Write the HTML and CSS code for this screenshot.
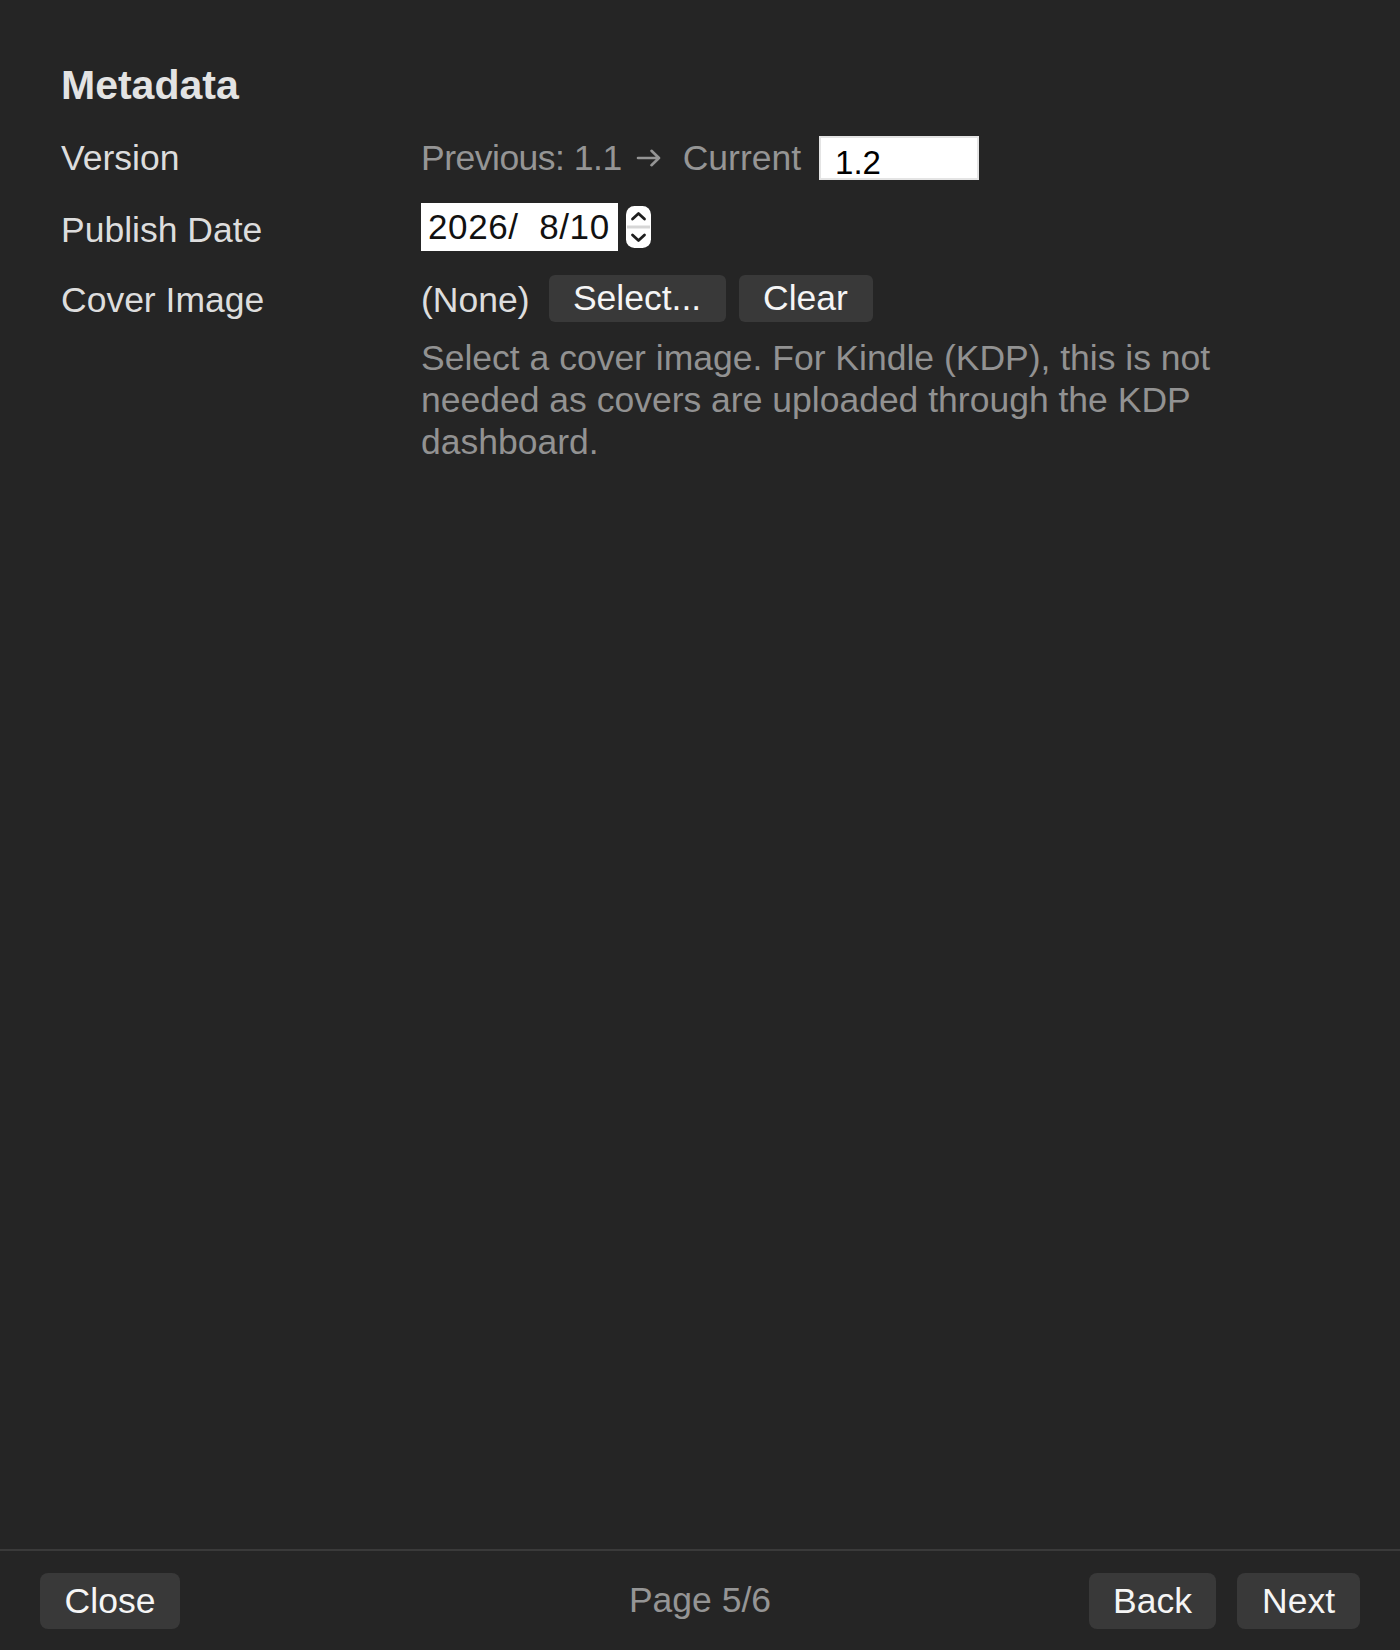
FILE: index.html
```html
<!DOCTYPE html>
<html>
<head>
<meta charset="utf-8">
<link rel="stylesheet" href="styles.css">
</head>
<body>
<div class="page">
  <main class="content">
    <h2 class="title">Metadata</h2>
    <div class="row row-version">
      <div class="label">Version</div>
      <div class="value">
        <span class="muted prev">Previous: 1.1</span>
        <svg class="arrow" width="26" height="18" viewBox="0 0 26 18">
          <path d="M2 9 H23 M15.5 1.8 L23 9 L15.5 16.2" fill="none" stroke="#959595" stroke-width="2.6" stroke-linecap="round" stroke-linejoin="round"/>
        </svg>
        <span class="muted">Current</span>
        <span class="text-input">1.2</span>
      </div>
    </div>
    <div class="row row-date">
      <div class="label">Publish Date</div>
      <div class="value">
        <span class="date-input">2026/  8/10</span>
        <svg class="stepper" width="25" height="42" viewBox="0 0 25 42">
          <rect x="0" y="0" width="25" height="42" rx="8.5" fill="#fff"/>
          <line x1="1" y1="21" x2="24" y2="21" stroke="#d6d6d6" stroke-width="3"/>
          <path d="M6.5 13 L12.5 7.5 L18.5 13" fill="none" stroke="#1e1e1e" stroke-width="2.8" stroke-linecap="round" stroke-linejoin="round"/>
          <path d="M6.5 29 L12.5 34.5 L18.5 29" fill="none" stroke="#1e1e1e" stroke-width="2.8" stroke-linecap="round" stroke-linejoin="round"/>
        </svg>
      </div>
    </div>
    <div class="row row-cover">
      <div class="label">Cover Image</div>
      <div class="value">
        <span class="none">(None)</span>
        <button class="btn btn-select">Select...</button>
        <button class="btn btn-clear">Clear</button>
      </div>
    </div>
    <p class="help">Select a cover image. For Kindle (KDP), this is not needed as covers are uploaded through the KDP dashboard.</p>
  </main>
  <footer class="footer">
    <div class="footer-left">
      <button class="btn fbtn btn-close">Close</button>
    </div>
    <span class="pager">Page 5/6</span>
    <div class="nav">
      <button class="btn fbtn btn-back">Back</button>
      <button class="btn fbtn btn-next">Next</button>
    </div>
  </footer>
</div>
</body>
</html>
```

FILE: styles.css
```css
* { box-sizing: border-box; }
html, body {
  margin: 0;
  padding: 0;
  background: #252525;
}
body {
  font-family: "Liberation Sans", Arial, sans-serif;
  color: #dddddd;
  font-size: 35.5px;
}
.page {
  width: 1400px;
  height: 1650px;
  display: flex;
  flex-direction: column;
}
.content {
  flex: 1;
  padding: 62px 0 0 61px;
}
.title {
  margin: 0 0 15px 0;
  font-size: 41px;
  font-weight: bold;
  line-height: 46px;
  color: #e3e3e3;
}
.row {
  display: flex;
  align-items: center;
  height: 70px;
}
.label {
  width: 360px;
  line-height: 40px;
  color: #dddddd;
}
.row-date .label,
.row-cover .label {
  padding-top: 4px;
}
.value {
  display: flex;
  align-items: center;
}
.muted {
  color: #959595;
  line-height: 40px;
}
.prev {
  letter-spacing: -0.5px;
}
.arrow {
  margin: 0 21px 0 14px;
  flex: none;
}
.text-input {
  margin-left: 18px;
  width: 160px;
  height: 44px;
  background: #fff;
  border: 2px solid #e4e4e4;
  color: #000;
  font-size: 33px;
  line-height: 26px;
  padding: 12px 0 0 14px;
}
.date-input {
  width: 197px;
  height: 48px;
  margin-top: -3px;
  background: #fff;
  color: #111;
  font-size: 35px;
  letter-spacing: 0.6px;
  line-height: 48px;
  padding-left: 7px;
  white-space: pre;
}
.stepper {
  margin-left: 8px;
  margin-top: -2px;
  flex: none;
}
.none {
  color: #dddddd;
  line-height: 40px;
  padding-top: 4px;
  margin-right: 19px;
}
.btn {
  font-family: "Liberation Sans", Arial, sans-serif;
  font-size: 35.5px;
  color: #f5f5f5;
  background: #393939;
  border: none;
  border-radius: 6px;
  height: 47px;
  padding: 0;
  line-height: 47px;
  text-align: center;
}
.btn-select { width: 177px; margin-right: 13px; }
.btn-clear { width: 134px; }
.help {
  margin: 4px 0 0 360px;
  color: #929292;
  line-height: 42px;
  width: 820px;
}
.footer {
  height: 101px;
  border-top: 2px solid #3a3a3a;
  display: grid;
  grid-template-columns: 1fr auto 1fr;
  align-items: center;
  padding: 0 40px;
}
.fbtn {
  height: 56px;
  line-height: 56px;
  border-radius: 8px;
}
.btn-close { width: 140px; }
.btn-back { width: 127px; }
.btn-next { width: 123px; }
.pager {
  color: #959595;
  text-align: center;
}
.nav {
  display: flex;
  justify-content: flex-end;
  gap: 21px;
}
```
